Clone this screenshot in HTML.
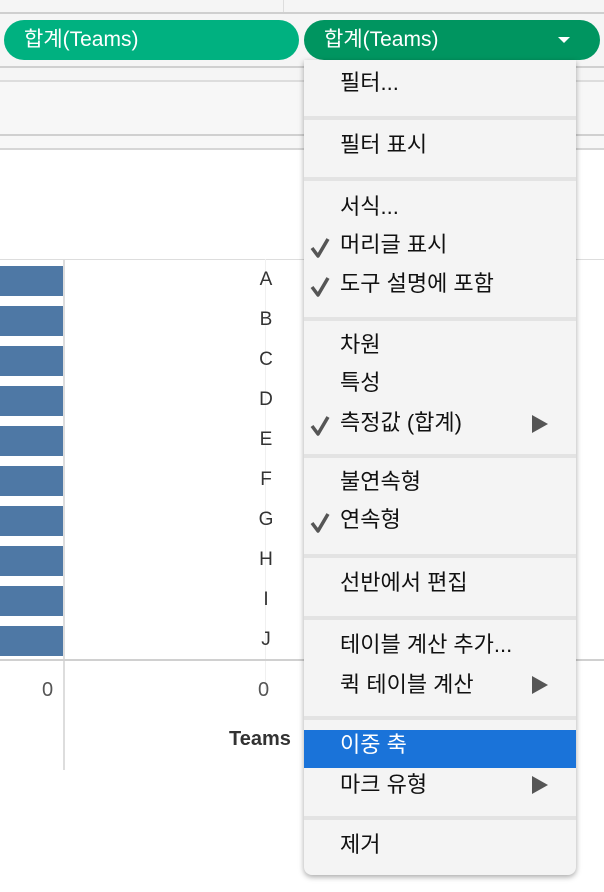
<!DOCTYPE html>
<html><head><meta charset="utf-8"><style>
*{margin:0;padding:0;box-sizing:border-box}
body{width:604px;height:892px;overflow:hidden;background:#fff;position:relative;font-family:"Liberation Sans","Noto Sans CJK KR",sans-serif}
.a{position:absolute}
.pill{position:absolute;top:20px;height:40px;border-radius:20px;color:#fff;font-size:21px;line-height:40px;padding-left:20px}
.menu{position:absolute;left:304px;top:60px;width:272px;height:815px;background:#f4f4f4;border-radius:0 0 8px 8px;box-shadow:0 2px 6px rgba(0,0,0,.35)}
.sep{position:absolute;left:0;width:272px;height:4px;background:#e3e3e3}
.it{position:absolute;left:36px;font-size:22px;line-height:30px;color:#111;white-space:nowrap}
.ck{position:absolute;left:6px;width:20px;height:22px}
.ar{position:absolute;left:228px;width:0;height:0;border-left:16px solid #555;border-top:9px solid transparent;border-bottom:9px solid transparent}
.bar{position:absolute;left:0;width:63px;height:30px;background:#4e78a5}
.lt{position:absolute;left:258px;font-size:19px;color:#333;width:16px;text-align:center}
</style></head><body>
<div class="a" style="left:0;top:0;width:604px;height:13px;background:#f5f5f5"></div>
<div class="a" style="left:283px;top:0;width:1px;height:13px;background:#ddd"></div>
<div class="a" style="left:0;top:12px;width:604px;height:2px;background:#cfcfcf"></div>
<div class="a" style="left:0;top:14px;width:604px;height:53px;background:#f5f5f5"></div>
<div class="pill" style="left:4px;width:295px;background:#00b180">합계(Teams)</div>
<div class="pill" style="left:304px;width:296px;background:#009560">합계(Teams)</div>
<div class="a" style="left:558px;top:37px;width:0;height:0;border-left:6px solid transparent;border-right:6px solid transparent;border-top:6px solid #fff"></div>
<div class="a" style="left:0;top:66px;width:604px;height:2px;background:#d0d0d0"></div>
<div class="a" style="left:0;top:68px;width:604px;height:12px;background:#f5f5f5"></div>
<div class="a" style="left:0;top:80px;width:604px;height:2px;background:#ddd"></div>
<div class="a" style="left:0;top:82px;width:604px;height:52px;background:#f7f7f7"></div>
<div class="a" style="left:0;top:134px;width:604px;height:2px;background:#d0d0d0"></div>
<div class="a" style="left:0;top:136px;width:604px;height:12px;background:#f7f7f7"></div>
<div class="a" style="left:0;top:148px;width:604px;height:2px;background:#d6d6d6"></div>
<div class="a" style="left:0;top:259px;width:604px;height:1px;background:#ddd"></div>
<div class="a" style="left:63px;top:259px;width:2px;height:511px;background:#ddd"></div>
<div class="a" style="left:265px;top:259px;width:1px;height:430px;background:#f0f0f0"></div>
<div class="a" style="left:0;top:659px;width:604px;height:2px;background:#d0d0d0"></div>
<div class="bar" style="top:266px"></div><div class="bar" style="top:306px"></div><div class="bar" style="top:346px"></div><div class="bar" style="top:386px"></div><div class="bar" style="top:426px"></div><div class="bar" style="top:466px"></div><div class="bar" style="top:506px"></div><div class="bar" style="top:546px"></div><div class="bar" style="top:586px"></div><div class="bar" style="top:626px"></div>
<div class="lt" style="top:269px">A</div><div class="lt" style="top:309px">B</div><div class="lt" style="top:349px">C</div><div class="lt" style="top:389px">D</div><div class="lt" style="top:429px">E</div><div class="lt" style="top:469px">F</div><div class="lt" style="top:509px">G</div><div class="lt" style="top:549px">H</div><div class="lt" style="top:589px">I</div><div class="lt" style="top:629px">J</div>
<div class="a" style="left:42px;top:679px;font-size:20px;color:#555">0</div>
<div class="a" style="left:258px;top:679px;font-size:20px;color:#555">0</div>
<div class="a" style="left:229px;top:728px;font-size:20px;font-weight:bold;color:#333">Teams</div>
<div class="menu">
<div class="it" style="top:8px">필터...</div>
<div class="sep" style="top:56px"></div>
<div class="it" style="top:70px">필터 표시</div>
<div class="sep" style="top:117px"></div>
<div class="it" style="top:132px">서식...</div>
<svg class="ck" style="top:176px" viewBox="0 0 20 22"><path d="M2 12 L8 20 L18 3" fill="none" stroke="#555" stroke-width="3.5" stroke-linejoin="round"/></svg><div class="it" style="top:170px">머리글 표시</div>
<svg class="ck" style="top:215px" viewBox="0 0 20 22"><path d="M2 12 L8 20 L18 3" fill="none" stroke="#555" stroke-width="3.5" stroke-linejoin="round"/></svg><div class="it" style="top:209px">도구 설명에 포함</div>
<div class="sep" style="top:257px"></div>
<div class="it" style="top:270px">차원</div>
<div class="it" style="top:308px">특성</div>
<svg class="ck" style="top:354px" viewBox="0 0 20 22"><path d="M2 12 L8 20 L18 3" fill="none" stroke="#555" stroke-width="3.5" stroke-linejoin="round"/></svg><div class="it" style="top:348px">측정값 (합계)</div><div class="ar" style="top:355px"></div>
<div class="sep" style="top:394px"></div>
<div class="it" style="top:407px">불연속형</div>
<svg class="ck" style="top:451px" viewBox="0 0 20 22"><path d="M2 12 L8 20 L18 3" fill="none" stroke="#555" stroke-width="3.5" stroke-linejoin="round"/></svg><div class="it" style="top:445px">연속형</div>
<div class="sep" style="top:494px"></div>
<div class="it" style="top:508px">선반에서 편집</div>
<div class="sep" style="top:556px"></div>
<div class="it" style="top:570px">테이블 계산 추가...</div>
<div class="it" style="top:610px">퀵 테이블 계산</div><div class="ar" style="top:616px"></div>
<div class="sep" style="top:656px"></div>
<div class="a" style="left:0;top:670px;width:272px;height:38px;background:#1a73d9"></div>
<div class="it" style="top:670px;color:#fff">이중 축</div>
<div class="it" style="top:710px">마크 유형</div><div class="ar" style="top:716px"></div>
<div class="sep" style="top:756px"></div>
<div class="it" style="top:770px">제거</div>
</div>
</body></html>
